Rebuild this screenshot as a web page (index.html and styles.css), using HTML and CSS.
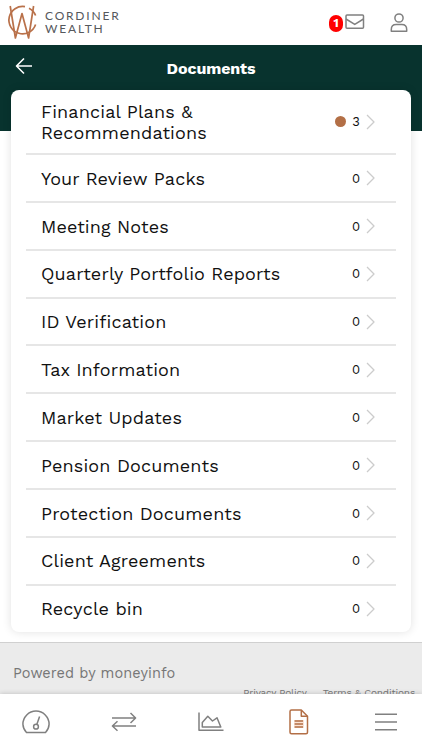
FILE: index.html
```html
<!DOCTYPE html>
<html lang="en">
<head>
    <meta charset="UTF-8">
    <meta name="viewport" content="width=device-width, initial-scale=1.0">
    <title>Cordiner Wealth - Documents</title>
    <link rel="stylesheet" href="styles.css">
</head>
<body>

<header class="top-bar">
    <div class="logo">
        <svg class="logo-mark" width="30" height="36" viewBox="0 0 30 36">
            <path d="M28.6 11.5A13.7 13.7 0 0 0 22 4.2M18 2.6A13.7 13.7 0 1 0 28.6 20.5"/>
            <path d="M3.2 2L8.4 34L15 9.5L21.6 34L26.6 2"/>
        </svg>
        <div class="logo-text">
            <span class="logo-line">CORDINER</span>
            <span class="logo-line">WEALTH</span>
        </div>
    </div>
    <div class="top-actions">
        <span class="badge">1</span>
        <svg class="icon mail" width="20" height="16" viewBox="0 0 20 16">
            <rect x="1" y="1" width="17.5" height="13.2" rx="1"/>
            <path d="M1 5L9.75 10.4L18.5 5"/>
        </svg>
        <svg class="icon user" width="18" height="20" viewBox="0 0 18 20">
            <circle cx="9" cy="5" r="4.1"/>
            <path d="M1.3 18.3V16.5Q1.3 11.6 6.2 11.6H11.8Q16.7 11.6 16.7 16.5V18.3Z"/>
        </svg>
    </div>
</header>

<div class="title-bar">
    <svg class="back" width="18" height="18" viewBox="0 0 18 18">
        <path d="M17 9H1.5M9 1.5L1.5 9L9 16.5"/>
    </svg>
    <h1>Documents</h1>
</div>

<main class="card">
    <a class="row first"><span class="name">Financial Plans &amp;<br>Recommendations</span><span class="dot"></span><span class="count">3</span><svg class="chevron" viewBox="0 0 9 16"><path d="M1 1L8 8L1 15"/></svg></a>
    <a class="row"><span class="name">Your Review Packs</span><span class="count">0</span><svg class="chevron" viewBox="0 0 9 16"><path d="M1 1L8 8L1 15"/></svg></a>
    <a class="row"><span class="name">Meeting Notes</span><span class="count">0</span><svg class="chevron" viewBox="0 0 9 16"><path d="M1 1L8 8L1 15"/></svg></a>
    <a class="row"><span class="name">Quarterly Portfolio Reports</span><span class="count">0</span><svg class="chevron" viewBox="0 0 9 16"><path d="M1 1L8 8L1 15"/></svg></a>
    <a class="row"><span class="name">ID Verification</span><span class="count">0</span><svg class="chevron" viewBox="0 0 9 16"><path d="M1 1L8 8L1 15"/></svg></a>
    <a class="row"><span class="name">Tax Information</span><span class="count">0</span><svg class="chevron" viewBox="0 0 9 16"><path d="M1 1L8 8L1 15"/></svg></a>
    <a class="row"><span class="name">Market Updates</span><span class="count">0</span><svg class="chevron" viewBox="0 0 9 16"><path d="M1 1L8 8L1 15"/></svg></a>
    <a class="row"><span class="name">Pension Documents</span><span class="count">0</span><svg class="chevron" viewBox="0 0 9 16"><path d="M1 1L8 8L1 15"/></svg></a>
    <a class="row"><span class="name">Protection Documents</span><span class="count">0</span><svg class="chevron" viewBox="0 0 9 16"><path d="M1 1L8 8L1 15"/></svg></a>
    <a class="row"><span class="name">Client Agreements</span><span class="count">0</span><svg class="chevron" viewBox="0 0 9 16"><path d="M1 1L8 8L1 15"/></svg></a>
    <a class="row"><span class="name">Recycle bin</span><span class="count">0</span><svg class="chevron" viewBox="0 0 9 16"><path d="M1 1L8 8L1 15"/></svg></a>
</main>

<footer class="footer">
    <p class="powered">Powered by moneyinfo</p>
    <div class="links">
        <a>Privacy Policy</a>
        <a>Terms &amp; Conditions</a>
    </div>
</footer>

<nav class="tab-bar">
    <svg class="icon" width="28" height="24" viewBox="0 0 28 24">
        <path d="M4.5 22.5A13 13 0 0 1 .9 14.2A13.1 13.1 0 0 1 27.1 14.2A13 13 0 0 1 23.5 22.5Z"/>
        <circle cx="14" cy="16.7" r="2.4"/>
        <path d="M14.8 14.4L17.6 6.5"/>
    </svg>
    <svg class="icon" width="28" height="20" viewBox="0 0 26 20">
        <path d="M1 6H24.6M19.5 1L24.6 6L19.5 11M25 14H1.4M6.5 9.3L1.4 14L6.5 18.7"/>
    </svg>
    <svg class="icon" width="28" height="20" viewBox="0 0 26 20">
        <path d="M1 .5V18.3H25.5"/>
        <path d="M4.3 15V10.5L9.8 4.2L14.5 9L19 5.8L22.8 15Z"/>
    </svg>
    <svg class="icon active" width="28" height="26" viewBox="0 0 20 26">
        <path class="tint" d="M5 11H15V19H5Z"/>
        <path d="M12.3 1H2.5Q1 1 1 2.5V23.2Q1 24.7 2.5 24.7H17Q18.5 24.7 18.5 23.2V7.2Z"/>
        <path d="M12.3 1V7.2H18.5M5.6 12H14M5.6 15H14M5.6 18H14"/>
    </svg>
    <svg class="icon" width="28" height="18" viewBox="0 0 22 18">
        <path d="M0 1.3H22M0 9H22M0 16.7H22"/>
    </svg>
</nav>

</body>
</html>
```
FILE: styles.css
```css
* {
    box-sizing: border-box;
}

body {
    display: flex;
    flex-direction: column;
    height: 750px;
    margin: 0;
    overflow: hidden;
    background-color: #ffffff;
    font-family: 'Work Sans', 'Noto Sans', sans-serif;
    color: #111111;
}

svg {
    display: block;
    flex: none;
    fill: none;
    stroke-linejoin: round;
}

.top-bar {
    display: flex;
    justify-content: space-between;
    flex: none;
    height: 45px;
    padding: 4px 14px 0 7px;
}

.logo {
    display: flex;
    gap: 8px;
}

.logo-mark {
    stroke: #b9714a;
    stroke-width: 1.7;
}

.logo-text {
    display: flex;
    flex-direction: column;
    padding-top: 6px;
}

.logo-line {
    font-family: Lato, sans-serif;
    font-size: 12px;
    line-height: 12.5px;
    letter-spacing: 1.8px;
    color: #55585c;
}

.top-actions {
    display: flex;
    align-items: flex-start;
    padding-top: 9px;
}

.badge {
    width: 14px;
    height: 17px;
    margin: 2px 2px 0 0;
    border-radius: 7px;
    background-color: #ff0000;
    color: #ffffff;
    font-size: 12px;
    font-weight: 700;
    line-height: 17px;
    text-align: center;
}

.icon {
    stroke: #808080;
    stroke-width: 1.5;
}

.mail {
    margin-top: 1px;
}

.user {
    margin-left: 25px;
}

.title-bar {
    display: flex;
    align-items: flex-start;
    flex: none;
    height: 86px;
    padding: 12px 15px;
    background-color: #08332e;
}

.back {
    stroke: #ffffff;
    stroke-width: 1.6;
}

h1 {
    flex: 1;
    margin: 0 18px 0 0;
    font-size: 16px;
    font-weight: 700;
    line-height: 23px;
    letter-spacing: -0.1px;
    text-align: center;
    color: #ffffff;
}

.card {
    position: relative;
    flex: none;
    height: 542px;
    margin: -41px 11px 0;
    padding: 0 15px;
    border-radius: 8px;
    background-color: #ffffff;
    box-shadow: 0 0 10px rgba(0, 0, 0, 0.12);
}

.row {
    display: flex;
    align-items: center;
    height: 47.85px;
    padding: 0.5px 21px 0 15px;
    border-bottom: 2px solid #e6e6e6;
}

.row.first {
    height: 65px;
    padding-top: 0;
}

.row:last-child {
    border-bottom-color: transparent;
}

.name {
    flex: 1;
    font-size: 18px;
    line-height: 21px;
    letter-spacing: 0.15px;
}

.dot {
    width: 11px;
    height: 11px;
    margin-right: 6px;
    border-radius: 50%;
    background-color: #b36f46;
}

.count {
    width: 8px;
    margin-right: 6px;
    font-size: 13px;
    text-align: center;
}

.chevron {
    width: 9px;
    height: 16px;
    stroke: #cccccc;
    stroke-width: 1.3;
}

.footer {
    flex: none;
    height: 52px;
    margin-top: 10px;
    padding: 21px 7px 0 13px;
    overflow: hidden;
    border-top: 1px solid #d0d0d0;
    background-color: #ebebeb;
    color: #777777;
}

.powered {
    margin: 0;
    font-size: 14.5px;
    line-height: 20px;
    letter-spacing: 0.1px;
}

.links {
    display: flex;
    justify-content: flex-end;
    gap: 16px;
    padding-top: 2px;
    font-size: 10px;
    line-height: 14px;
    letter-spacing: -0.15px;
}

.tab-bar {
    display: flex;
    align-items: center;
    justify-content: space-between;
    position: relative;
    flex: none;
    height: 56px;
    padding: 0 22px;
    background-color: #ffffff;
    box-shadow: 0 0 5px rgba(0, 0, 0, 0.2);
}

.active {
    stroke: #b36f46;
}

.tint {
    fill: #fbe3d5;
    stroke: none;
}
```
